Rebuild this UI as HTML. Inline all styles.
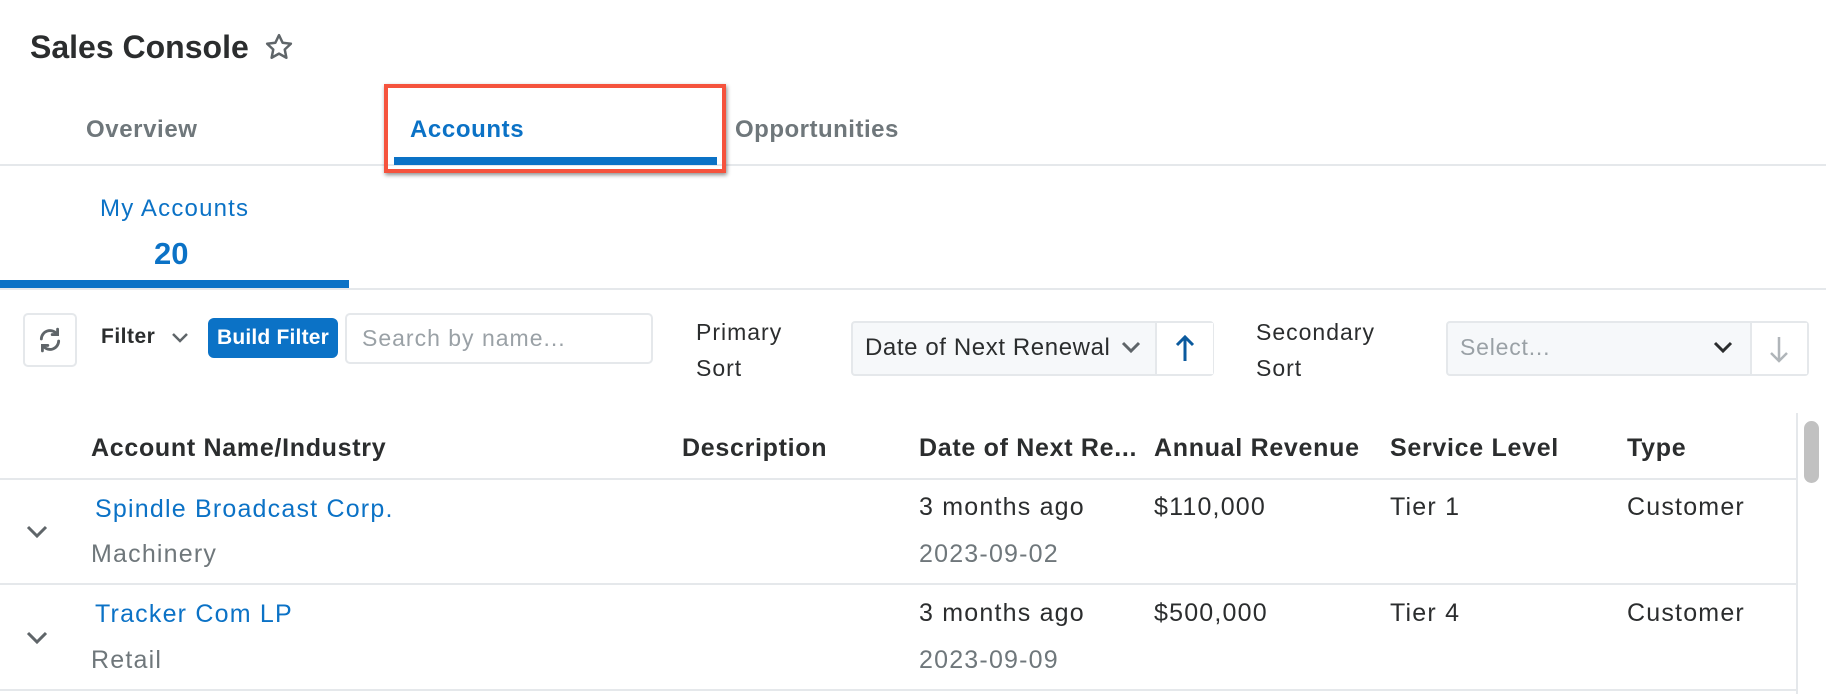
<!DOCTYPE html>
<html><head><meta charset="utf-8"><style>
*{margin:0;padding:0;box-sizing:border-box}
body{width:1826px;height:694px;overflow:hidden;background:#fff;font-family:"Liberation Sans",Arial,sans-serif;color:#2b2d2e;position:relative}
.a{position:absolute;white-space:nowrap}
.hd{font-weight:bold;font-size:25px;letter-spacing:0.7px;color:#2b2d2e}
.td{font-size:25px;letter-spacing:1.2px;color:#2b2d2e}
.gr{color:#6f777b}
.ln{position:absolute;left:0;height:2px;background:#e5e8eb}
</style></head><body>
<div class="a" style="left:30px;top:29px;font-size:32px;font-weight:bold;">Sales Console</div>
<svg class="a" style="left:264px;top:32px" width="30" height="30" viewBox="0 0 24 24"><path d="M12 2.5l2.9 6.1 6.6.8-4.9 4.6 1.3 6.6L12 17.3l-5.9 3.3 1.3-6.6-4.9-4.6 6.6-.8z" fill="none" stroke="#5f6569" stroke-width="2" stroke-linejoin="round"/></svg>

<div class="a" style="left:86px;top:116px;font-size:24px;letter-spacing:0.6px;font-weight:bold;color:#6f777b">Overview</div>
<div class="a" style="left:410px;top:116px;font-size:24px;letter-spacing:0.6px;font-weight:bold;color:#0b72c6">Accounts</div>
<div class="a" style="left:735px;top:116px;font-size:24px;letter-spacing:0.5px;font-weight:bold;color:#6f777b">Opportunities</div>
<div class="ln" style="top:164px;width:1826px"></div>
<div class="a" style="left:394px;top:157px;width:323px;height:8px;background:#0b72c6"></div>
<div class="a" style="left:384px;top:84px;width:342px;height:89px;border:4px solid #f5533d;box-shadow:1px 2px 4px rgba(0,0,0,.45)"></div>

<div class="a" style="left:100px;top:195px;font-size:24px;letter-spacing:1.2px;color:#0b72c6">My Accounts</div>
<div class="a" style="left:154px;top:236px;font-size:31px;font-weight:bold;color:#0b72c6">20</div>
<div class="ln" style="top:288px;width:1826px"></div>
<div class="a" style="left:0;top:280px;width:349px;height:8px;background:#0b72c6"></div>

<div class="a" style="left:23px;top:313px;width:54px;height:54px;border:2px solid #e5e8eb;border-radius:5px"></div>
<svg class="a" style="left:37px;top:327px" width="26" height="26" viewBox="0 0 24 24" fill="none" stroke="#5f6569" stroke-width="2.6" stroke-linecap="round"><path d="M4 11a8 8 0 0 1 14-5"/><path d="M19 2v5h-5"/><path d="M20 13a8 8 0 0 1-14 5"/><path d="M5 22v-5h5"/></svg>
<div class="a" style="left:101px;top:325px;font-size:21px;letter-spacing:0.5px;font-weight:bold">Filter</div>
<svg class="a" style="left:171px;top:331px" width="18" height="14" viewBox="0 0 18 14"><path d="M2 3l7 7 7-7" fill="none" stroke="#5f6569" stroke-width="2.5"/></svg>
<div class="a" style="left:208px;top:318px;width:130px;height:40px;background:#0b72c6;border-radius:6px;color:#fff;font-weight:bold;font-size:21px;letter-spacing:0.2px;text-align:center;line-height:40px">Build Filter</div>
<div class="a" style="left:345px;top:313px;width:308px;height:51px;border:2px solid #e5e8eb;border-radius:5px;font-size:23px;letter-spacing:1px;color:#9aa1a6;padding-left:15px;line-height:47px">Search by name...</div>
<div class="a" style="left:696px;top:314px;font-size:23px;letter-spacing:1px;line-height:36px">Primary<br>Sort</div>
<div class="a" style="left:851px;top:321px;width:363px;height:55px;border:2px solid #e5e8eb;border-radius:4px;background:#f6f8fa"></div>
<div class="a" style="left:1155px;top:323px;width:58px;height:51px;background:#fff;border-left:2px solid #e5e8eb"></div>
<div class="a" style="left:865px;top:334px;font-size:24px;letter-spacing:0.6px">Date of Next Renewal</div>
<svg class="a" style="left:1121px;top:341px" width="20" height="14" viewBox="0 0 20 14"><path d="M2 2l8 8 8-8" fill="none" stroke="#5f6569" stroke-width="3"/></svg>
<svg class="a" style="left:1174px;top:333px" width="22" height="30" viewBox="0 0 22 30"><path d="M11 28V4M3 12l8-8 8 8" fill="none" stroke="#0b5a9e" stroke-width="3"/></svg>
<div class="a" style="left:1256px;top:314px;font-size:23px;letter-spacing:1px;line-height:36px">Secondary<br>Sort</div>
<div class="a" style="left:1446px;top:321px;width:363px;height:55px;border:2px solid #e5e8eb;border-radius:4px;background:#f6f8fa"></div>
<div class="a" style="left:1750px;top:323px;width:57px;height:51px;background:#fff;border-left:2px solid #e5e8eb"></div>
<div class="a" style="left:1460px;top:334px;font-size:23px;letter-spacing:0.8px;color:#9aa1a6">Select...</div>
<svg class="a" style="left:1713px;top:341px" width="20" height="14" viewBox="0 0 20 14"><path d="M2 2l8 8 8-8" fill="none" stroke="#2b2d2e" stroke-width="3"/></svg>
<svg class="a" style="left:1768px;top:335px" width="22" height="30" viewBox="0 0 22 30"><path d="M11 2v24M3 18l8 8 8-8" fill="none" stroke="#b0b5b9" stroke-width="2.5"/></svg>

<div class="a" style="left:1796px;top:413px;width:2px;height:281px;background:#e5e8eb"></div>
<div class="a" style="left:1804px;top:421px;width:15px;height:62px;background:#c1c1c1;border-radius:8px"></div>

<div class="a hd" style="left:91px;top:434px">Account Name/Industry</div>
<div class="a hd" style="left:682px;top:434px">Description</div>
<div class="a hd" style="left:919px;top:434px">Date of Next Re...</div>
<div class="a hd" style="left:1154px;top:434px">Annual Revenue</div>
<div class="a hd" style="left:1390px;top:434px">Service Level</div>
<div class="a hd" style="left:1627px;top:434px">Type</div>
<div class="ln" style="top:478px;width:1796px"></div>

<svg class="a" style="left:26px;top:525px" width="22" height="14" viewBox="0 0 22 14"><path d="M2 2l9 9 9-9" fill="none" stroke="#5f6569" stroke-width="3"/></svg>
<div class="a td" style="left:95px;top:495px;color:#0b72c6">Spindle Broadcast Corp.</div>
<div class="a td gr" style="left:91px;top:540px">Machinery</div>
<div class="a td" style="left:919px;top:493px">3 months ago</div>
<div class="a td gr" style="left:919px;top:540px">2023-09-02</div>
<div class="a td" style="left:1154px;top:493px">$110,000</div>
<div class="a td" style="left:1390px;top:493px">Tier 1</div>
<div class="a td" style="left:1627px;top:493px">Customer</div>
<div class="ln" style="top:583px;width:1796px"></div>

<svg class="a" style="left:26px;top:631px" width="22" height="14" viewBox="0 0 22 14"><path d="M2 2l9 9 9-9" fill="none" stroke="#5f6569" stroke-width="3"/></svg>
<div class="a td" style="left:95px;top:600px;color:#0b72c6">Tracker Com LP</div>
<div class="a td gr" style="left:91px;top:646px">Retail</div>
<div class="a td" style="left:919px;top:599px">3 months ago</div>
<div class="a td gr" style="left:919px;top:646px">2023-09-09</div>
<div class="a td" style="left:1154px;top:599px">$500,000</div>
<div class="a td" style="left:1390px;top:599px">Tier 4</div>
<div class="a td" style="left:1627px;top:599px">Customer</div>
<div class="ln" style="top:689px;width:1796px"></div>
</body></html>
